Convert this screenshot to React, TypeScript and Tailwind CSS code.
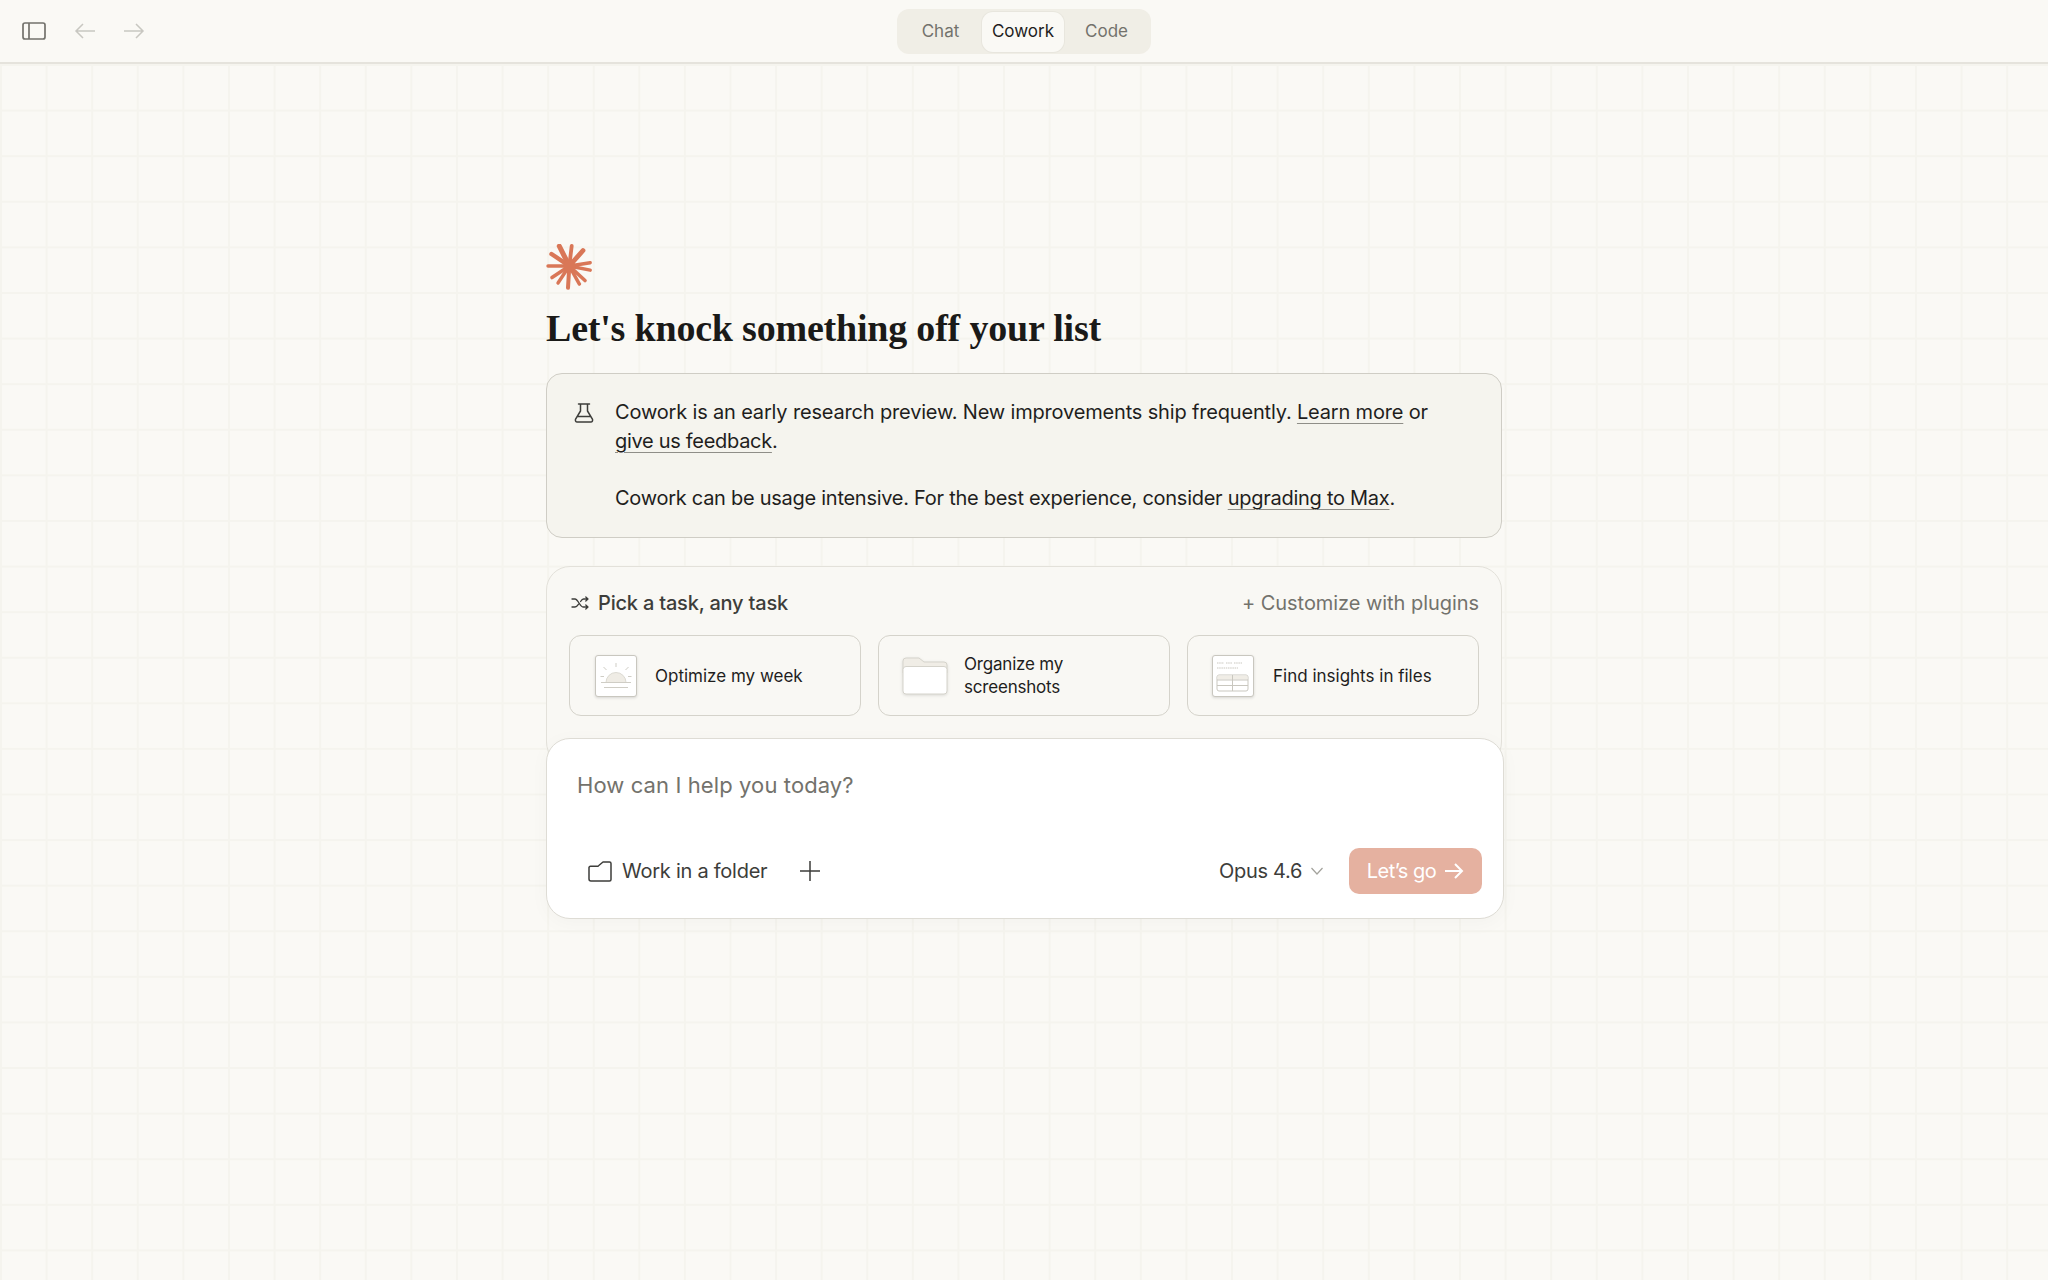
const sans = "font-['Inter','Liberation_Sans',sans-serif]";

function SidebarIcon() {
  return (
    <svg width="24" height="18" viewBox="0 0 24 18" fill="none" stroke="#73726c" strokeWidth="1.7">
      <rect x="1" y="1" width="22" height="16" rx="2" />
      <path d="M7 1v16" />
    </svg>
  );
}

function ArrowLeft() {
  return (
    <svg width="22" height="18" viewBox="0 0 22 18" fill="none" stroke="#c8c7c1" strokeWidth="1.5">
      <path d="M21 9H2M9 2 2 9l7 7" />
    </svg>
  );
}

function ArrowRight() {
  return (
    <svg width="22" height="18" viewBox="0 0 22 18" fill="none" stroke="#c8c7c1" strokeWidth="1.5">
      <path d="M1 9h19M13 2l7 7-7 7" />
    </svg>
  );
}

function Logo() {
  const ends: [number, number, number][] = [
    [13.3, 2.2, 5], [25.7, 2, 3.8], [37, 6.5, 4.8], [44.2, 18.7, 3.4], [44.2, 26.2, 3.4], [39, 36.5, 3.6],
    [33.3, 40, 3.6], [22, 43.8, 4], [12, 39, 3.4], [6, 33.5, 3.6], [2, 22, 3.4], [5.5, 10, 4.4],
  ];
  return (
    <svg width="46" height="46" viewBox="0 0 46 46" fill="none" stroke="#d97757" strokeLinecap="round">
      {ends.map(([x, y, w], i) => (
        <path key={i} d={`M23.3 22 L${x} ${y}`} strokeWidth={w} />
      ))}
      <circle cx="23.3" cy="22" r="6" fill="#d97757" stroke="none" />
    </svg>
  );
}

function Flask() {
  return (
    <svg width="22" height="22" viewBox="0 0 22 22" fill="none" stroke="#3d3d3a" strokeWidth="1.5" strokeLinejoin="round" strokeLinecap="round">
      <path d="M5.500 2h11M7.500 2v7L2.600 17.200A1.900 1.900 0 0 0 4.200 20h13.600a1.900 1.900 0 0 0 1.600-2.800L14.500 9V2M5 14.500h12" />
    </svg>
  );
}

function Shuffle() {
  return (
    <svg width="18" height="14" viewBox="0 0 18 14" fill="none" stroke="#3d3d3a" strokeWidth="1.3" strokeLinecap="round" strokeLinejoin="round">
      <path d="M1 3h3c3 0 5 8 8 8h5M1 11h3c1.300 0 2.400-1.200 3.400-2.700M9.600 5.500C10.500 4 11 3 12.500 3H17M14.800 1 17 3l-2.200 2M14.800 9 17 11l-2.200 2" />
    </svg>
  );
}

function SunTile() {
  return (
    <div className="w-[42px] h-[42px] shrink-0 bg-white border-[1.5px] border-[#c9c7bf] rounded-[3px] shadow-[0_1px_3px_rgba(0,0,0,0.14)]">
      <svg width="39" height="39" viewBox="0 0 39 39" fill="none" stroke="#cfcdc5" strokeWidth="1">
        <path d="M10 26.500a10 10 0 0 1 20 0z" fill="#efece5" stroke="#dcdad2" />
        <path d="M5 26.500h30M8 31.500h24M20 7v4M7.500 11l3 3M32.500 11l-3 3M4.500 20.500h3.500M32 20.500h3.500" />
      </svg>
    </div>
  );
}

function FolderTile() {
  return (
    <svg width="46" height="40" viewBox="0 0 46 40" fill="none" className="shrink-0 drop-shadow-[0_1px_1.500px_rgba(0,0,0,0.12)]">
      <path d="M1 5a3 3 0 0 1 3-3h13l5 4h20a3 3 0 0 1 3 3v8H1z" fill="#f0ede6" stroke="#d5d3cb" />
      <rect x="1" y="10.500" width="44" height="27.500" rx="3" fill="#fff" stroke="#d5d3cb" />
    </svg>
  );
}

function TableTile() {
  return (
    <div className="w-[42px] h-[42px] shrink-0 bg-white border-[1.5px] border-[#c9c7bf] rounded-[3px] shadow-[0_1px_3px_rgba(0,0,0,0.14)]">
      <svg width="39" height="39" viewBox="0 0 39 39" fill="none" stroke="#c9c7bf" strokeWidth="1">
        <path d="M4 7h7M13 7h6M21 7h8M4 12h21" strokeDasharray="1.500 0.700" />
        <rect x="4" y="19" width="31" height="16" rx="2" />
        <path d="M4.500 19.500h30v4h-30z" fill="#f0ede6" stroke="none" />
        <path d="M4 24h31M4 29.500h31M19.500 19v16" />
      </svg>
    </div>
  );
}

function FolderOutline() {
  return (
    <svg width="24" height="21" viewBox="0 0 24 21" fill="none" stroke="#3d3d3a" strokeWidth="1.5" strokeLinejoin="round">
      <path d="M1 6.500V18a2 2 0 0 0 2 2h18.500a1.500 1.500 0 0 0 1.500-1.500V2.500A1.500 1.500 0 0 0 21.500 1H15l-4.500 3.800c-.4.300-.8.500-1.300.5H2.500A1.500 1.500 0 0 0 1 6.500z" />
    </svg>
  );
}

function Link({ children, className = "" }: { children: string; className?: string }) {
  return <span className={`underline decoration-1 underline-offset-[4px] decoration-[#8f8e88] ${className}`}>{children}</span>;
}

function Card({ icon, label, className }: { icon: React.ReactNode; label: React.ReactNode; className: string }) {
  return (
    <div className={`w-[292px] h-[81px] flex items-center ${className} border border-[#d5d3cb] rounded-[12px] text-[17px] leading-[23px] text-[#1f1e1d]`}>
      {icon}
      <div className="pt-[1px]">{label}</div>
    </div>
  );
}

export default function App() {
  return (
    <div className={`${sans} h-screen flex flex-col bg-[#faf9f5] overflow-hidden`}>
      <header className="h-[64px] shrink-0 border-b-2 border-[#e5e3dc] relative flex items-center pl-[22px]">
        <SidebarIcon />
        <div className="ml-[28px]"><ArrowLeft /></div>
        <div className="ml-[27px]"><ArrowRight /></div>
        <div className="absolute left-[897px] top-[9px] w-[254px] h-[45px] rounded-[12px] bg-[#f0eee6] flex items-center justify-center pr-[1px] text-[17px]">
          <div className="w-[82px] text-center text-[#73726c]">Chat</div>
          <div className="w-[82px] h-[40px] pl-[1px] flex items-center justify-center bg-[#faf9f5] rounded-[11px] shadow-[0_0_0_1px_#e8e6de] text-[#1f1e1d]">Cowork</div>
          <div className="w-[84px] pl-[2px] text-center text-[#73726c]">Code</div>
        </div>
      </header>
      <main className="flex-1 bg-[linear-gradient(to_right,#f5f4ee_2px,transparent_2px),linear-gradient(to_bottom,#f5f4ee_2px,transparent_2px)] bg-[size:45.6px_45.6px]">
        <div className="w-[956px] ml-[546px] pt-[180px]">
          <Logo />
          <h1 className="mt-[14px] text-[38px] leading-[48px] font-bold tracking-[-0.2px] text-[#1a1a18] font-['Liberation_Serif',serif]">Let's knock something off your list</h1>
          <div className="mt-[21px] h-[165px] bg-[#f5f4ee] border border-[#cfcdc5] rounded-[16px] flex pl-[26px] pt-[26px] text-[20px] leading-[28.600px] tracking-[-0.17px] text-[#1f1e1d]">
            <div className="mt-[2px]"><Flask /></div>
            <div className="ml-[20px] -mt-[2px]">
              <p>Cowork is an early research preview. New improvements ship frequently. <Link>Learn more</Link> or<br /><Link className="tracking-[-0.3px]">give us feedback</Link>.</p>
              <p className="mt-[28.600px] tracking-[-0.27px]">Cowork can be usage intensive. For the best experience, consider <Link>upgrading to Max</Link>.</p>
            </div>
          </div>
          <div className="mt-[28px] h-[200px] bg-[#f9f8f4] border border-[#e3e1da] rounded-[24px] px-[22px]">
            <div className="h-[68px] pt-[4px] flex items-center justify-between">
              <div className="flex items-center gap-[9px] pl-[2px] text-[20px] font-medium tracking-[-0.2px] text-[#3d3d3a]">
                <Shuffle />
                <span>Pick a task, any task</span>
              </div>
              <span className="text-[20px] tracking-[-0.05px] text-[#73726c]">+ Customize with plugins</span>
            </div>
            <div className="flex gap-[17px]">
              <Card icon={<SunTile />} className="gap-[18px] pl-[25px]" label="Optimize my week" />
              <Card icon={<FolderTile />} className="gap-[16px] pl-[23px]" label={<span className="tracking-[-0.2px]">Organize my<br />screenshots</span>} />
              <Card icon={<TableTile />} className="gap-[19px] pl-[24px]" label="Find insights in files" />
            </div>
          </div>
          <div className="-mt-[28px] relative w-[958px] h-[181px] bg-white border border-[#dedcd5] rounded-[24px] shadow-[0_4px_20px_rgba(0,0,0,0.03)]">
            <div className="pl-[30px] pt-[31px] text-[22px] leading-[30px] tracking-[0.1px] text-[#73726c]">How can I help you today?</div>
            <div className="absolute left-[41px] right-[21px] top-[109px] h-[46px] flex items-center">
              <FolderOutline />
              <span className="ml-[10px] text-[20px] tracking-[-0.25px] text-[#3d3d3a]">Work in a folder</span>
              <svg className="ml-[32px]" width="22" height="22" viewBox="0 0 22 22" fill="none" stroke="#3d3d3a" strokeWidth="1.5">
                <path d="M11 1v20M1 11h20" />
              </svg>
              <span className="ml-auto text-[20px] tracking-[-0.3px] text-[#3d3d3a]">Opus 4.6</span>
              <svg className="ml-[8px]" width="14" height="10" viewBox="0 0 14 10" fill="none" stroke="#a3a29c" strokeWidth="1.2">
                <path d="M1.500 2 7 8l5.500-6" />
              </svg>
              <div className="ml-[25px] w-[133px] h-[46px] rounded-[10px] bg-[#e5b1a0] text-white text-[20px] tracking-[-0.5px] flex items-center justify-center gap-[8px]">
                <span>Let’s go</span>
                <svg width="20" height="18" viewBox="0 0 20 18" fill="none" stroke="#fff" strokeWidth="2">
                  <path d="M1 9h17M11 2l7 7-7 7" />
                </svg>
              </div>
            </div>
          </div>
        </div>
      </main>
    </div>
  );
}
